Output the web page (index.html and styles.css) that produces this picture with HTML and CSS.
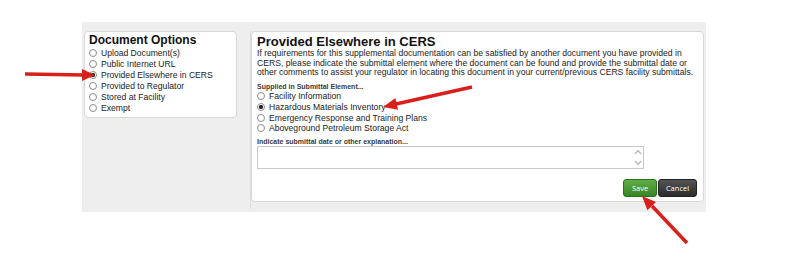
FILE: index.html
```html
<!DOCTYPE html>
<html lang="en">
<head>
    <meta charset="UTF-8">
    <title>Provided Elsewhere in CERS</title>
    <link rel="stylesheet" href="styles.css">
</head>
<body>

<div class="screen">
    <div class="side">
        <div class="panel options">
            <h2>Document Options</h2>
            <label class="opt"><input type="radio" name="doc"> Upload Document(s)</label>
            <label class="opt"><input type="radio" name="doc"> Public Internet URL</label>
            <label class="opt"><input type="radio" name="doc" checked> Provided Elsewhere in CERS</label>
            <label class="opt"><input type="radio" name="doc"> Provided to Regulator</label>
            <label class="opt"><input type="radio" name="doc"> Stored at Facility</label>
            <label class="opt"><input type="radio" name="doc"> Exempt</label>
        </div>
    </div>

    <div class="panel main">
        <h1>Provided Elsewhere in CERS</h1>
        <p class="intro">If requirements for this supplemental documentation can be satisfied by another document you have provided in CERS, please indicate the submittal element where the document can be found and provide the submittal date or other comments to assist your regulator in locating this document in your current/previous CERS facility submittals.</p>

        <div class="field-label">Supplied in Submittal Element...</div>
        <label class="opt wide"><input type="radio" name="element"> Facility Information</label>
        <label class="opt wide"><input type="radio" name="element" checked> Hazardous Materials Inventory</label>
        <label class="opt wide"><input type="radio" name="element"> Emergency Response and Training Plans</label>
        <label class="opt wide"><input type="radio" name="element"> Aboveground Petroleum Storage Act</label>

        <div class="field-label gap">Indicate submittal date or other explanation...</div>
        <div class="textbox">
            <textarea></textarea>
            <div class="scroll">
                <svg width="8" height="6" viewBox="0 0 8 6"><path d="M1 5 L4 1.5 L7 5" fill="none" stroke="#b5b5b5" stroke-width="1.2"/></svg>
                <svg width="8" height="6" viewBox="0 0 8 6"><path d="M1 1 L4 4.5 L7 1" fill="none" stroke="#b5b5b5" stroke-width="1.2"/></svg>
            </div>
        </div>

        <div class="actions">
            <button class="btn save">Save</button>
            <button class="btn cancel">Cancel</button>
        </div>
    </div>
</div>

<svg class="arrows" width="795" height="257" viewBox="0 0 795 257">
    <g fill="#d81f1b" stroke="#d81f1b">
        <line x1="25" y1="74" x2="84" y2="75" stroke-width="3.5"/>
        <polygon points="82,69 95,75 82,81" stroke="none"/>
        <line x1="472" y1="87" x2="396" y2="104" stroke-width="3.5"/>
        <polygon points="398,109.8 395.4,98 383,107" stroke="none"/>
        <line x1="687" y1="243" x2="652" y2="206" stroke-width="3.5"/>
        <polygon points="656,202 647.4,210.3 642,196" stroke="none"/>
    </g>
</svg>

</body>
</html>
```

FILE: styles.css
```css
* {
    box-sizing: border-box;
    margin: 0;
    padding: 0;
}
body {
    font-family: "Liberation Sans", Arial, sans-serif;
    background: #fff;
    color: #222;
    width: 795px;
    height: 257px;
    position: relative;
    overflow: hidden;
}
.screen {
    display: flex;
    align-items: flex-start;
    width: 624px;
    height: 190px;
    margin: 22px 0 0 82px;
    padding: 9px 2px 0 2px;
    background: #eeeeee;
}
.side {
    width: 167px;
    height: 178px;
    border-right: 1px solid #dcdcdc;
}
.panel {
    background: #fff;
    border: 1px solid #d8d8d8;
    border-radius: 4px;
}
.options {
    width: 153px;
    height: 87px;
    padding: 2px 4px 0 4px;
}
.options h2 {
    font-size: 12px;
    line-height: 13px;
    font-weight: bold;
    color: #111;
}
.opt {
    display: flex;
    align-items: center;
    height: 11px;
    font-size: 8.6px;
    color: #222;
    white-space: nowrap;
}
.opt.wide {
    height: 10.7px;
}
.opt input {
    appearance: none;
    -webkit-appearance: none;
    width: 8px;
    height: 8px;
    margin: 0 4px 0 0;
    border: 1px solid #8c8c8c;
    border-radius: 50%;
    background: #fff;
    flex: none;
}
.opt input:checked {
    background: radial-gradient(circle, #2a2a2a 0 1.8px, #fff 2.4px);
}
.main {
    width: 453px;
    height: 171px;
    padding: 3px 2px 0 5px;
}
.main h1 {
    font-size: 13px;
    line-height: 14px;
    font-weight: bold;
    color: #111;
}
.intro {
    font-size: 8.6px;
    line-height: 9.6px;
    color: #222;
}
.field-label {
    font-size: 7px;
    line-height: 9px;
    font-weight: bold;
    color: #3a3a3a;
    margin-top: 4px;
}
.field-label.gap {
    margin-top: 3px;
}
.textbox {
    display: flex;
    width: 387px;
    height: 23px;
    border: 1px solid #c8c8c8;
    background: #fff;
}
.textbox textarea {
    flex: 1;
    border: none;
    resize: none;
    outline: none;
}
.scroll {
    display: flex;
    flex-direction: column;
    justify-content: space-between;
    padding: 2px 1px 2px 0;
}
.actions {
    display: flex;
    justify-content: flex-end;
    gap: 1px;
    margin-top: 10px;
    padding-right: 4px;
}
.btn {
    height: 18px;
    border-radius: 3px;
    color: #fff;
    font-family: "Open Sans", "Liberation Sans", sans-serif;
    font-size: 7.5px;
    cursor: pointer;
}
.save {
    width: 34px;
    background: linear-gradient(#62ac45, #358626);
    border: 1px solid #2c6e1e;
}
.cancel {
    width: 39px;
    background: linear-gradient(#545454, #2c2c2c);
    border: 1px solid #222;
}
.arrows {
    position: absolute;
    top: 0;
    left: 0;
    pointer-events: none;
}
```
